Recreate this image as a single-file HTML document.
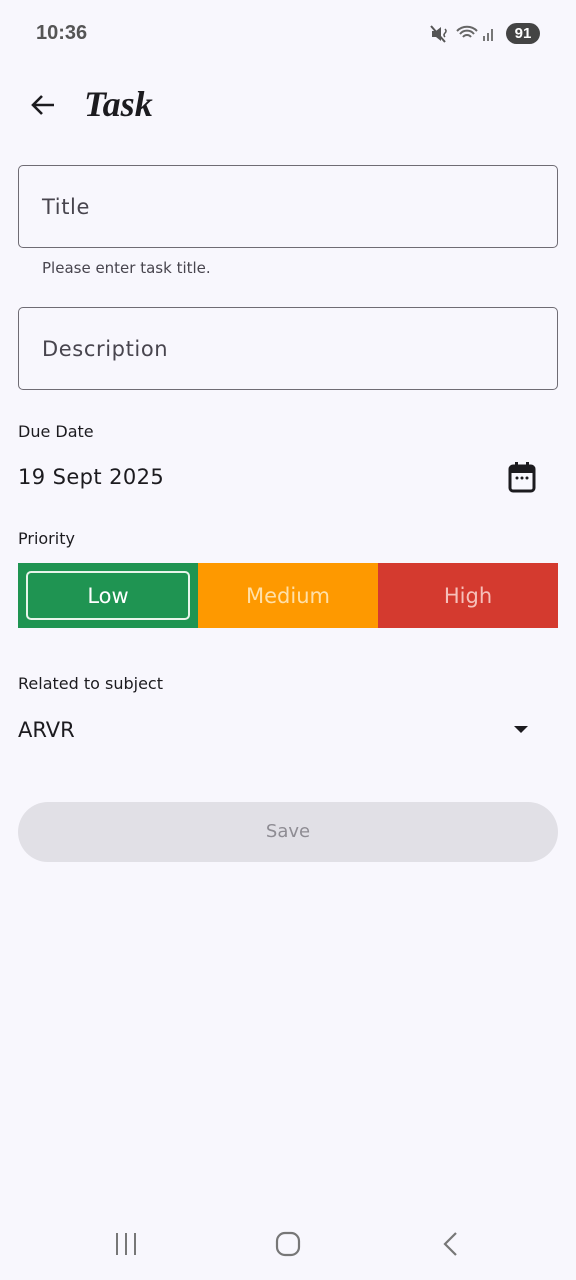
<!DOCTYPE html>
<html><head><meta charset="utf-8"><style>
*{margin:0;padding:0;box-sizing:border-box}
body{width:576px;height:1280px;background:#f8f7fd;font-family:"DejaVu Sans","Liberation Sans",sans-serif;color:#1c1b1f;position:relative;overflow:hidden}
.a{position:absolute}
.field{position:absolute;left:18px;width:540px;height:83px;border:1.5px solid #6f6c74;border-radius:5px}
.field span{position:absolute;left:23px;top:29px;font-size:21px;color:#48454e;letter-spacing:.6px}
</style></head><body>
<div class="a" style="left:36px;top:22px;font-size:20px;font-weight:bold;color:#555;font-family:'Liberation Sans',sans-serif">10:36</div>
<svg class="a" style="left:430px;top:25px" width="20" height="18" viewBox="0 0 20 18"><path d="M2 6h4l5-4v14l-5-4H2z" fill="#555"/><path d="M1 1l14 16" stroke="#555" stroke-width="2"/><path d="M15 4q2 2 0 4q-2 2 0 4" stroke="#555" stroke-width="1.5" fill="none"/></svg>
<svg class="a" style="left:455px;top:24px" width="48" height="20" viewBox="0 0 48 20"><path d="M2 7a14 14 0 0 1 20 0M5 10a9 9 0 0 1 14 0M8 13a5 5 0 0 1 8 0" stroke="#666" stroke-width="2" fill="none"/><rect x="28" y="12" width="2" height="5" fill="#777"/><rect x="32" y="9" width="2" height="8" fill="#777"/><rect x="36" y="5" width="2" height="12" fill="#777"/></svg>
<div class="a" style="left:506px;top:23px;width:34px;height:21px;border-radius:11px;background:#444;color:#fff;font-size:15px;font-weight:bold;text-align:center;line-height:21px;font-family:'Liberation Sans',sans-serif">91</div>
<svg class="a" style="left:28px;top:90px" width="30" height="30" viewBox="0 0 30 30"><path d="M26 15H5M14 6l-9 9 9 9" stroke="#1c1b1f" stroke-width="2.6" fill="none"/></svg>
<div class="a" style="left:84px;top:83px;font-size:36px;font-style:italic;font-weight:bold;font-family:'Liberation Serif',serif">Task</div>
<div class="field" style="top:165px"><span>Title</span></div>
<div class="a" style="left:42px;top:259px;font-size:15px;color:#48454e">Please enter task title.</div>
<div class="field" style="top:307px"><span>Description</span></div>
<div class="a" style="left:18px;top:422px;font-size:16px">Due Date</div>
<div class="a" style="left:18px;top:465px;font-size:21px;letter-spacing:.4px">19 Sept 2025</div>
<svg class="a" style="left:508px;top:461px" width="28" height="32" viewBox="0 0 28 32"><rect x="2" y="5" width="24" height="25" rx="3" fill="none" stroke="#1c1b1f" stroke-width="3"/><rect x="2" y="5" width="24" height="7" fill="#1c1b1f"/><rect x="7" y="1" width="3" height="6" fill="#1c1b1f"/><rect x="18" y="1" width="3" height="6" fill="#1c1b1f"/><circle cx="9" cy="17" r="1.5" fill="#1c1b1f"/><circle cx="14" cy="17" r="1.5" fill="#1c1b1f"/><circle cx="19" cy="17" r="1.5" fill="#1c1b1f"/></svg>
<div class="a" style="left:18px;top:529px;font-size:16px">Priority</div>
<div class="a" style="left:18px;top:563px;width:180px;height:65px;background:#1f9452"></div>
<div class="a" style="left:26px;top:571px;width:164px;height:49px;border:2px solid #e8f4ea;border-radius:5px;color:#fff;font-size:21px;text-align:center;line-height:47px">Low</div>
<div class="a" style="left:198px;top:563px;width:180px;height:65px;background:#fe9900;color:#ffe0a8;font-size:21px;text-align:center;line-height:67px">Medium</div>
<div class="a" style="left:378px;top:563px;width:180px;height:65px;background:#d43a2f;color:#f6c0ba;font-size:21px;text-align:center;line-height:67px">High</div>
<div class="a" style="left:18px;top:674px;font-size:16px">Related to subject</div>
<div class="a" style="left:18px;top:718px;font-size:21px">ARVR</div>
<div class="a" style="left:514px;top:726px;width:0;height:0;border-left:7px solid transparent;border-right:7px solid transparent;border-top:7px solid #1c1b1f"></div>
<div class="a" style="left:18px;top:802px;width:540px;height:60px;border-radius:30px;background:#e1e0e6;color:#8e8c93;font-size:18px;text-align:center;line-height:60px">Save</div>
<svg class="a" style="left:110px;top:1230px" width="360" height="30" viewBox="0 0 360 30"><path d="M7 3v22M16 3v22M25 3v22" stroke="#777" stroke-width="2"/><rect x="167" y="3" width="22" height="22" rx="8" fill="none" stroke="#777" stroke-width="2.2"/><path d="M346 3l-11 11 11 11" stroke="#777" stroke-width="2.2" fill="none"/></svg>
</body></html>
